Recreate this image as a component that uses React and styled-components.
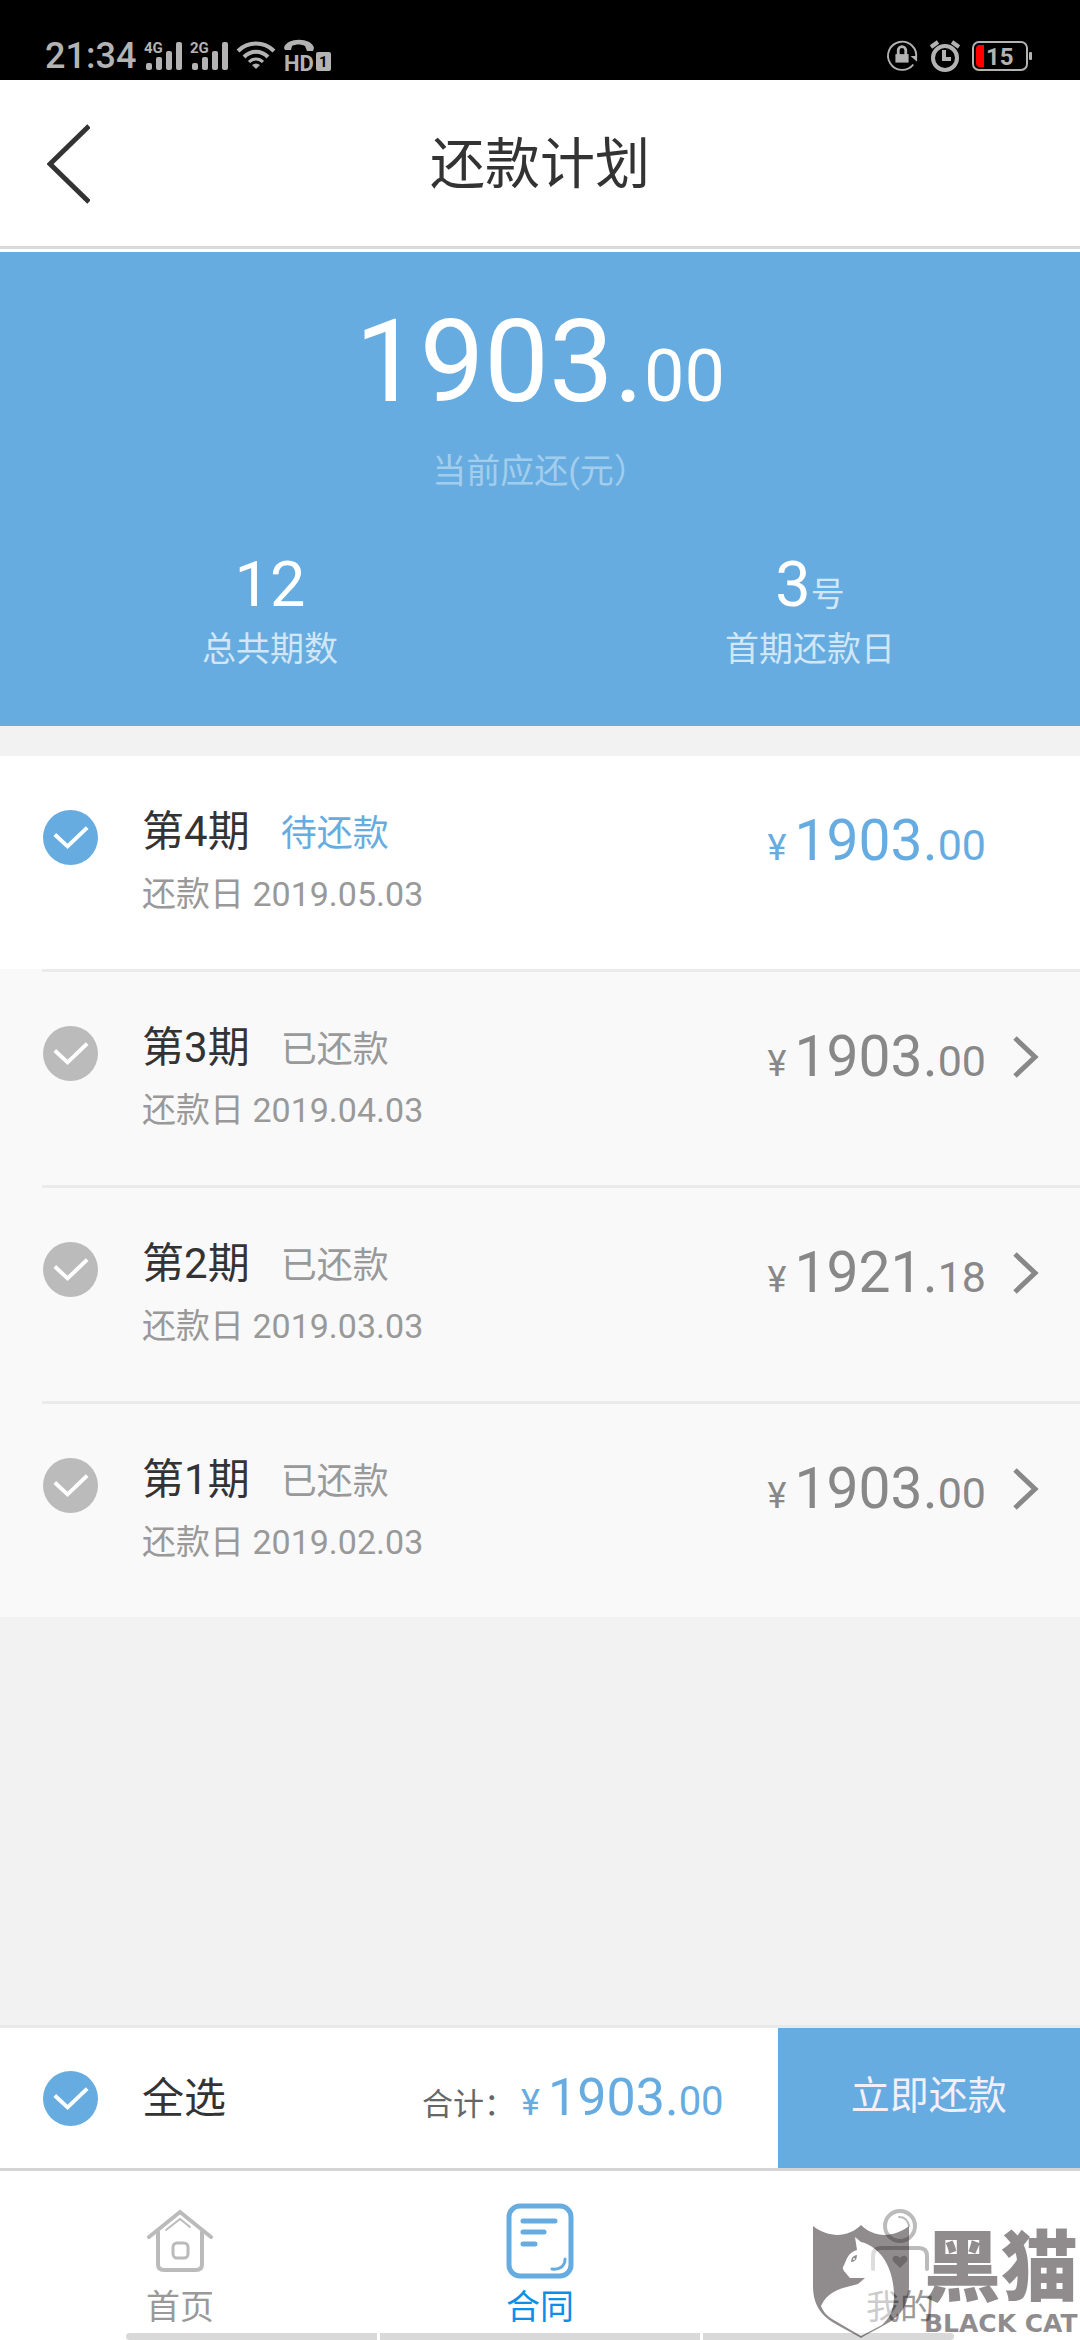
import React, { useState } from 'react'
import styled, { createGlobalStyle, ThemeProvider } from 'styled-components'

const theme = {
  colors: {
    main: '#66ace0',
    text: '#333333',
    muted: '#999999',
    amount: '#888888',
    status: '#b3b3b3',
    background: '#f2f2f2',
  },
}

const GlobalStyle = createGlobalStyle`
  * {
    box-sizing: border-box;
  }
  body {
    margin: 0;
    background-color: ${theme.colors.background};
    font-family: Roboto, 'Noto Sans CJK SC', sans-serif;
    color: ${theme.colors.text};
  }
  h1, h2, p, ul, dl, dd {
    margin: 0;
    padding: 0;
    font-weight: 400;
  }
  button {
    padding: 0;
    border: none;
    background: none;
    font-family: inherit;
    cursor: pointer;
  }
`
const Page = styled.div`
  position: relative;
  display: flex;
  flex-direction: column;
  min-height: 100vh;
`

/* Status bar */
const StatusBar = styled.div`
  display: flex;
  justify-content: space-between;
  height: 80px;
  padding: 36px 48px 0 45px;
  background-color: #000000;
  color: ${(props) => props.theme.colors.status};

  svg {
    display: block;
    overflow: visible;
  }
`
const StatusGroup = styled.div`
  display: flex;
  align-items: center;
  height: 40px;
  gap: ${(props) => props.$gap}px;
`
const Time = styled.span`
  font-size: 36px;
  font-weight: 500;
  line-height: 40px;
`

/* Header */
const Header = styled.header`
  display: grid;
  grid-template-columns: 120px 1fr 120px;
  align-items: center;
  height: 169px;
  padding-top: 2px;
  border-bottom: 3px solid #d9d9d9;
  background-color: #ffffff;
`
const Back = styled.button`
  display: flex;
  align-items: center;
  padding-left: 47px;
`
const PageTitle = styled.h1`
  font-size: 55px;
  line-height: 80px;
  text-align: center;
`

/* Summary */
const Summary = styled.section`
  margin-bottom: 30px;
  padding: 42px 0 53px;
  border-top: 3px solid #ffffff;
  background-color: ${(props) => props.theme.colors.main};
  color: #ffffff;
  text-align: center;
`
const Due = styled.p`
  font-size: 115px;
  line-height: 136px;

  small {
    font-size: 72px;
  }
`
const DueLabel = styled.p`
  margin-top: 2px;
  font-size: 34px;
  line-height: 48px;
  color: #a3cdec;
`
const Facts = styled.dl`
  display: grid;
  grid-template-columns: 1fr 1fr;
  margin-top: 50px;
`
const Fact = styled.div`
  display: flex;
  flex-direction: column-reverse;
`
const FactLabel = styled.dt`
  font-size: 34px;
  line-height: 48px;
  color: #d1e6f6;
`
const FactValue = styled.dd`
  font-size: 63px;
  line-height: 80px;

  small {
    font-size: 34px;
    line-height: 48px;
    color: #d1e6f6;
  }
`

/* Instalments */
const List = styled.ul`
  list-style: none;
`
const Row = styled.li`
  display: flex;
  align-items: stretch;
  height: ${(props) => (props.$paid ? 216 : 213)}px;
  padding-left: 42px;
  background-color: ${(props) => (props.$paid ? '#f9f9f9' : '#ffffff')};
`
const RowBody = styled.div`
  display: flex;
  flex: 1;
  align-items: flex-start;
  padding-top: 43px;
  border-top: ${(props) => (props.$paid ? '3px solid #ebebeb' : 'none')};
`
const Check = styled.input`
  appearance: none;
  flex: none;
  width: 55px;
  height: 55px;
  margin: ${(props) => (props.$row ? 11 : 0)}px 44px 0 1px;
  border-radius: 50%;
  background-color: #bbbbbb;
  background-image: url("data:image/svg+xml,%3Csvg xmlns='http://www.w3.org/2000/svg' viewBox='0 0 56 56'%3E%3Cpath d='M12 25L25 37L45 18' fill='none' stroke='white' stroke-width='4'/%3E%3C/svg%3E");

  &:checked {
    background-color: ${(props) => props.theme.colors.main};
  }
`
const Info = styled.label`
  flex: 1;
`
const Name = styled.span`
  display: flex;
  align-items: baseline;
  gap: 31px;
  font-size: 42px;
  line-height: 66px;
`
const State = styled.span`
  font-size: 36px;
  color: ${(props) =>
    props.$paid ? props.theme.colors.muted : props.theme.colors.main};
`
const DateLine = styled.span`
  display: block;
  font-size: 34px;
  line-height: 54px;
  color: ${(props) => props.theme.colors.muted};
`
const Money = styled.span`
  display: flex;
  align-items: baseline;
  font-size: ${(props) => (props.$total ? 52 : 57)}px;
  line-height: 84px;
  color: ${(props) =>
    props.$paid ? props.theme.colors.amount : props.theme.colors.main};

  small {
    font-size: ${(props) => (props.$total ? 40 : 43)}px;
  }
`
const Yen = styled.span`
  margin-right: 8px;
  font-size: 36px;
`
const Detail = styled.button`
  display: flex;
  align-items: center;
  width: 94px;
  height: 84px;
  padding-left: 27px;
`
const DetailSpace = styled.span`
  width: 94px;
`

/* Bottom bars */
const PayBar = styled.section`
  display: flex;
  align-items: stretch;
  height: 143px;
  margin-top: auto;
  border-top: 3px solid #e9e9e9;
  background-color: #ffffff;
`
const SelectAll = styled.label`
  display: flex;
  flex: 1;
  align-items: center;
  padding-left: 42px;
  font-size: 42px;

  span {
    padding-bottom: 8px;
  }
`
const Total = styled.div`
  display: flex;
  align-items: baseline;
  padding: 28px 54px 0 0;
`
const TotalLabel = styled.span`
  margin-right: 6px;
  font-size: 31px;
  color: #666666;
`
const Pay = styled.button`
  flex: 0 0 28%;
  padding-bottom: 4px;
  background-color: ${(props) => props.theme.colors.main};
  color: #f3eef8;
  font-size: 39px;
  line-height: 56px;
`
const TabBar = styled.nav`
  display: grid;
  grid-template-columns: repeat(3, 1fr);
  height: 172px;
  padding-top: 28px;
  border-top: 3px solid #d4d4d4;
  background-color: #ffffff;
`
const Tab = styled.a`
  display: flex;
  flex-direction: column;
  align-items: center;
  font-size: 34px;
  line-height: 48px;
  text-decoration: none;
  color: ${(props) => (props.$active ? '#0d8ee9' : props.theme.colors.muted)};
`
const TabIcon = styled.span`
  display: flex;
  align-items: center;
  height: 84px;
`
const GestureBar = styled.div`
  position: absolute;
  bottom: 0;
  left: 0;
  display: grid;
  grid-template-columns: 251fr 320fr 251fr;
  gap: 3px;
  width: 100%;
  padding: 0 126px;

  span {
    height: 7px;
    background-color: #d9d9d9;
  }
  span:first-child {
    border-radius: 4px 0 0 4px;
  }
  span:last-child {
    border-radius: 0 4px 4px 0;
  }
`
const Watermark = styled.div`
  position: absolute;
  right: 2px;
  bottom: 0;
  display: flex;
  align-items: flex-end;
  gap: 14px;
  color: #231b1d;
  opacity: 0.5;
  pointer-events: none;
`
const Brand = styled.div`
  display: flex;
  flex-direction: column;
  gap: 4px;
  width: 154px;
`
const BrandName = styled.span`
  font-family: 'Noto Sans CJK SC', sans-serif;
  font-size: 77px;
  font-weight: 900;
  line-height: 84px;
  white-space: nowrap;
`
const BrandLatin = styled.span`
  font-family: 'DejaVu Sans', sans-serif;
  font-size: 25px;
  font-weight: 700;
  line-height: 32px;
  white-space: nowrap;
`

const Signal = ({ label }) => (
  <svg width='38' height='32' viewBox='0 0 38 32' fill='currentColor'>
    <text x='0' y='13' fontSize='15' fontWeight='700'>
      {label}
    </text>
    <rect x='2' y='23' width='6' height='7' rx='2' />
    <rect x='12' y='17' width='6' height='13' rx='2' />
    <rect x='22' y='11' width='6' height='19' rx='2' />
    <rect x='32' y='2' width='6' height='28' rx='2' />
  </svg>
)

const WifiIcon = () => (
  <svg width='40' height='32' viewBox='0 0 40 32' fill='none' stroke='currentColor' strokeWidth='4'>
    <path d='M2 11C12 1 28 1 38 11' />
    <path d='M8 17C15 10 25 10 32 17' />
    <path d='M13 22C17 18 23 18 27 22' strokeWidth='3' />
    <path d='M20 29L16 25Q20 22 24 25Z' fill='currentColor' stroke='none' />
  </svg>
)

const HdIcon = () => (
  <svg width='48' height='34' viewBox='0 0 48 34' fill='currentColor'>
    <path d='M0 9C2-2 28-2 30 9L29 12H23L21 7C17 5 12 5 8 7L7 11H1Z' />
    <text x='0' y='32' fontSize='22' fontWeight='700'>
      HD
    </text>
    <rect x='32' y='13' width='15' height='19' rx='2' />
    <text x='35' y='28' fontSize='15' fontWeight='700' fill='#000000'>
      1
    </text>
  </svg>
)

const LockIcon = () => (
  <svg width='32' height='32' viewBox='0 0 34 34' fill='none' stroke='currentColor' strokeWidth='2'>
    <path d='M29 26A15 15 0 1 1 32 19' />
    <path d='M26 17H33V23Z' fill='currentColor' stroke='none' />
    <rect x='10' y='15' width='14' height='9' fill='currentColor' stroke='none' />
    <path d='M13 16V11A4 4 0 0 1 21 11V16' strokeWidth='3' />
  </svg>
)

const AlarmIcon = () => (
  <svg width='30' height='34' viewBox='0 0 30 34' fill='none' stroke='currentColor'>
    <circle cx='15' cy='19' r='12' strokeWidth='4' />
    <path d='M14 11V20H21' strokeWidth='4' />
    <path d='M1 8L8 3M29 8L22 3' strokeWidth='4' />
  </svg>
)

const BatteryIcon = () => (
  <svg width='60' height='32' viewBox='0 0 60 32'>
    <rect x='1' y='2' width='54' height='28' rx='6' fill='none' stroke='currentColor' strokeWidth='2' />
    <path d='M12 5V27H8Q4 27 4 23V9Q4 5 8 5Z' fill='#ff0000' />
    <rect x='57' y='12' width='3' height='8' rx='1' fill='currentColor' />
    <text x='14' y='25' fontSize='24' fontWeight='700' fill='currentColor'>
      15
    </text>
  </svg>
)

const HomeIcon = () => (
  <svg width='66' height='64' viewBox='0 0 66 64' fill='none' stroke='#bbbbbb' strokeLinecap='round'>
    <path d='M2 28L33 3L64 28' strokeWidth='4' />
    <path d='M11 23V55Q11 61 17 61H49Q55 61 55 55V23' strokeWidth='4' />
    <rect x='26' y='34' width='15' height='15' rx='4' strokeWidth='3' />
    <path d='M19 21L33 10L43 18' strokeWidth='2' />
  </svg>
)

const ContractIcon = () => (
  <svg width='68' height='76' viewBox='0 0 68 76' fill='none' stroke='#66ace0' strokeLinecap='round'>
    <rect x='3' y='3' width='62' height='70' rx='11' strokeWidth='5' />
    <path d='M17 18H49M17 29H38M17 41H29' strokeWidth='5' />
    <path d='M46 66C54 67 59 63 59 56' strokeWidth='3' />
  </svg>
)

const MineIcon = () => (
  <svg width='60' height='64' viewBox='0 0 60 64' fill='none' stroke='#bbbbbb' strokeLinecap='round'>
    <circle cx='30' cy='17' r='15' strokeWidth='4' />
    <path d='M29 8C35 8 38 12 39 17' strokeWidth='2' />
    <path d='M3 60V47Q3 39 11 39H49Q57 39 57 47V60' strokeWidth='4' />
    <path d='M30 59L23 52C21 47 27 45 30 49C33 45 39 47 37 52Z' fill='#bbbbbb' stroke='none' />
  </svg>
)

const ShieldIcon = () => (
  <svg width='98' height='116' viewBox='0 0 98 116'>
    <path
      d='M1 2C18 15 37 13 49 1C61 13 80 15 97 2V62C97 96 71 100 49 114C27 100 1 96 1 62Z'
      fill='currentColor'
    />
    <path
      d='M45 26L43 13L49 18C67 22 82 42 82 72C82 88 77 94 70 101L49 112L20 95C14 91 11 87 9 82C16 66 31 64 46 60L53 54H38C34 49 30 46 31 43C35 36 35 29 45 26Z'
      fill='#ffffff'
    />
    <path d='M39 38Q39 32 45 31Q45 38 39 38Z' fill='currentColor' />
    <circle cx='42' cy='35' r='1' fill='#ffffff' />
  </svg>
)

const Amount = ({ value, paid, total }) => {
  const [whole, cents] = value.split('.')
  return (
    <Money $paid={paid} $total={total}>
      <Yen>¥</Yen>
      <span>
        {whole}.<small>{cents}</small>
      </span>
    </Money>
  )
}

const instalments = [
  { id: 4, paid: false, date: '2019.05.03', amount: '1903.00' },
  { id: 3, paid: true, date: '2019.04.03', amount: '1903.00' },
  { id: 2, paid: true, date: '2019.03.03', amount: '1921.18' },
  { id: 1, paid: true, date: '2019.02.03', amount: '1903.00' },
]

export default function App() {
  const [selected, setSelected] = useState(true)
  const toggle = () => setSelected(!selected)

  return (
    <ThemeProvider theme={theme}>
      <GlobalStyle />
      <Page>
        <StatusBar>
          <StatusGroup $gap={8}>
            <Time>21:34</Time>
            <Signal label='4G' />
            <Signal label='2G' />
            <WifiIcon />
            <HdIcon />
          </StatusGroup>
          <StatusGroup $gap={12}>
            <LockIcon />
            <AlarmIcon />
            <BatteryIcon />
          </StatusGroup>
        </StatusBar>

        <Header>
          <Back aria-label='返回'>
            <svg width='43' height='80' viewBox='0 0 43 80' fill='none' stroke='#333333' strokeWidth='5'>
              <path d='M42 2L3 40L42 78' />
            </svg>
          </Back>
          <PageTitle>还款计划</PageTitle>
        </Header>

        <Summary>
          <Due>
            1903.<small>00</small>
          </Due>
          <DueLabel>当前应还(元）</DueLabel>
          <Facts>
            <Fact>
              <FactLabel>总共期数</FactLabel>
              <FactValue>12</FactValue>
            </Fact>
            <Fact>
              <FactLabel>首期还款日</FactLabel>
              <FactValue>
                3<small>号</small>
              </FactValue>
            </Fact>
          </Facts>
        </Summary>

        <List>
          {instalments.map(({ id, paid, date, amount }) => (
            <Row key={id} $paid={paid}>
              <RowBody $paid={paid}>
                <Check
                  type='checkbox'
                  id={`period-${id}`}
                  $row
                  checked={!paid && selected}
                  disabled={paid}
                  onChange={toggle}
                />
                <Info htmlFor={`period-${id}`}>
                  <Name>
                    第{id}期<State $paid={paid}>{paid ? '已还款' : '待还款'}</State>
                  </Name>
                  <DateLine>还款日 {date}</DateLine>
                </Info>
                <Amount value={amount} paid={paid} />
                {paid ? (
                  <Detail aria-label={`第${id}期详情`}>
                    <svg width='26' height='42' viewBox='0 0 26 42' fill='none' stroke='#888888' strokeWidth='5'>
                      <path d='M2 2L22 21L2 40' />
                    </svg>
                  </Detail>
                ) : (
                  <DetailSpace />
                )}
              </RowBody>
            </Row>
          ))}
        </List>

        <PayBar>
          <SelectAll>
            <Check type='checkbox' checked={selected} onChange={toggle} />
            <span>全选</span>
          </SelectAll>
          <Total>
            <TotalLabel>合计：</TotalLabel>
            <Amount value='1903.00' total />
          </Total>
          <Pay>立即还款</Pay>
        </PayBar>

        <TabBar>
          <Tab href='#home'>
            <TabIcon>
              <HomeIcon />
            </TabIcon>
            首页
          </Tab>
          <Tab href='#contract' $active>
            <TabIcon>
              <ContractIcon />
            </TabIcon>
            合同
          </Tab>
          <Tab href='#mine'>
            <TabIcon>
              <MineIcon />
            </TabIcon>
            我的
          </Tab>
        </TabBar>
        <GestureBar>
          <span />
          <span />
          <span />
        </GestureBar>
        <Watermark>
          <ShieldIcon />
          <Brand>
            <BrandName>黑猫</BrandName>
            <BrandLatin>BLACK CAT</BrandLatin>
          </Brand>
        </Watermark>
      </Page>
    </ThemeProvider>
  )
}
